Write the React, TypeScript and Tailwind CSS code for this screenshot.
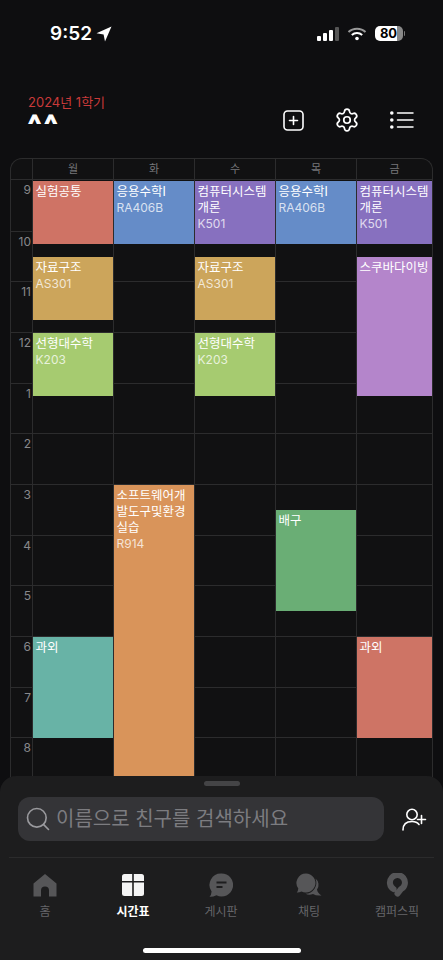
import React from 'react';
import { Search, Settings } from 'lucide-react';

const FONT = "font-['Inter','Noto_Sans_CJK_KR',sans-serif]";
const HOUR = 50.67;
const hours = ['9', '10', '11', '12', '1', '2', '3', '4', '5', '6', '7', '8'];
const days = ['월', '화', '수', '목', '금'];

interface Course {
  day: number;
  top: number;
  height: number;
  title: string;
  room?: string;
  color: string;
}

const courses: Course[] = [
  { day: 0, top: 1, height: 63, title: '실험공통', color: 'bg-[#cf7365]' },
  { day: 1, top: 1, height: 63, title: '응용수학I', room: 'RA406B', color: 'bg-[#658cc8]' },
  { day: 2, top: 1, height: 63, title: '컴퓨터시스템개론', room: 'K501', color: 'bg-[#8770bf]' },
  { day: 3, top: 1, height: 63, title: '응용수학I', room: 'RA406B', color: 'bg-[#658cc8]' },
  { day: 4, top: 1, height: 63, title: '컴퓨터시스템개론', room: 'K501', color: 'bg-[#8770bf]' },
  { day: 0, top: 77, height: 63, title: '자료구조', room: 'AS301', color: 'bg-[#cca55b]' },
  { day: 2, top: 77, height: 63, title: '자료구조', room: 'AS301', color: 'bg-[#cca55b]' },
  { day: 0, top: 153, height: 63, title: '선형대수학', room: 'K203', color: 'bg-[#a6cb70]' },
  { day: 2, top: 153, height: 63, title: '선형대수학', room: 'K203', color: 'bg-[#a6cb70]' },
  { day: 4, top: 77, height: 139, title: '스쿠바다이빙', color: 'bg-[#b485cb]' },
  { day: 1, top: 305, height: 300, title: '소프트웨어개발도구및환경실습', room: 'R914', color: 'bg-[#d9945a]' },
  { day: 3, top: 330, height: 101, title: '배구', color: 'bg-[#6aae75]' },
  { day: 0, top: 457, height: 101, title: '과외', color: 'bg-[#68b3a6]' },
  { day: 4, top: 457, height: 101, title: '과외', color: 'bg-[#ce7465]' },
];

const StatusBar = () => (
  <div className="flex h-[66px] items-center justify-between pl-[50px] pr-[38px] pt-[1px]">
    <div className="flex items-center gap-[4px] text-white">
      <span className="text-[19px] font-semibold leading-none">9:52</span>
      <svg width="16" height="16" viewBox="0 0 16 16" fill="white">
        <path d="M15.5 0.5 L0.5 7.2 L7.6 8.4 L9 15.5 Z" />
      </svg>
    </div>
    <div className="flex items-center gap-[8px]">
      <svg width="22" height="14" viewBox="0 0 22 14" fill="white">
        <rect x="0" y="9" width="4" height="5" rx="1" />
        <rect x="6" y="6" width="4" height="8" rx="1" />
        <rect x="12" y="3" width="4" height="11" rx="1" />
        <rect x="18" y="0" width="4" height="14" rx="1" fill="#555" />
      </svg>
      <svg width="20" height="14" viewBox="0 0 20 14" fill="none" stroke="white" strokeWidth="2">
        <path d="M1.5 5 C6 0.6 14 0.6 18.5 5" stroke="#999" />
        <path d="M4.8 8 C7.8 5.3 12.2 5.3 15.2 8" />
        <circle cx="10" cy="11.5" r="1.8" fill="white" stroke="none" />
      </svg>
      <div className="flex items-center gap-[1px]">
        <div className="flex h-[15px] w-[28px] items-center justify-center rounded-[5px] bg-[linear-gradient(90deg,#fff_78%,#888_78%)] text-[13px] font-bold leading-none text-black">
          80
        </div>
        <div className="h-[5px] w-[1.5px] rounded-r bg-[#777]" />
      </div>
    </div>
  </div>
);

const Header = () => (
  <div className="flex h-[92px] items-start justify-between pl-[28px] pr-[29px] pt-[27px]">
    <div>
      <p className="text-[13px] leading-[18px] text-[#c93a3a]">2024년 1학기</p>
      <p className="mt-[1px] text-[27px] font-bold leading-[26px] tracking-[3px] text-white [-webkit-text-stroke:1px_white]">^^</p>
    </div>
    <div className="mt-[14px] flex items-center gap-[30px]">
      <svg width="21" height="21" viewBox="0 0 21 21" fill="none" stroke="white" strokeWidth="1.6" strokeLinecap="round">
        <rect x="1" y="1" width="19" height="19" rx="3.5" />
        <path d="M10.5 6.5v8M6.5 10.5h8" />
      </svg>
      <Settings size={26} color="white" strokeWidth={1.6} />
      <svg width="24" height="18" viewBox="0 0 24 18" fill="white" stroke="white" strokeLinecap="round">
        <circle cx="1.8" cy="2" r="1.8" stroke="none" />
        <circle cx="1.8" cy="9" r="1.8" stroke="none" />
        <circle cx="1.8" cy="16" r="1.8" stroke="none" />
        <path d="M7.5 2H23M7.5 9H23M7.5 16H23" strokeWidth="1.5" />
      </svg>
    </div>
  </div>
);

const CourseBlock = ({ course }: { course: Course }) => (
  <div
    className={`absolute inset-x-0 overflow-hidden pl-[2.5px] pt-[3px] ${course.color}`}
    style={{ top: course.top, height: course.height }}
  >
    <p className="break-all text-[12.5px] font-normal leading-[16px] text-white">{course.title}</p>
    {course.room && <p className="text-[12px] leading-[15px] text-white/75">{course.room}</p>}
  </div>
);

const Timetable = () => (
  <div className="mx-[10px] h-[640px] overflow-hidden rounded-t-[12px] border-x border-t border-[#2c2c2d] bg-[#111112]">
    <div className="flex">
      <div className="h-[21px] w-[21px] shrink-0 border-b border-[#2c2c2d]" />
      {days.map((d, i) => (
        <div
          key={d}
          className={`flex h-[21px] items-center justify-center border-b border-l border-[#2c2c2d] text-[11px] text-[#77777a] ${i === 4 ? 'flex-1' : 'w-[81px]'}`}
        >
          {d}
        </div>
      ))}
    </div>
    <div className="flex">
      <div className="w-[21px] shrink-0">
        {hours.map((h, i) => (
          <div
            key={h}
            className={`pr-[1px] text-right text-[12px] leading-[15px] text-[#88888b] ${i > 0 ? 'border-t border-[#2c2c2d]' : ''}`}
            style={{ height: HOUR, paddingTop: 2 }}
          >
            {h}
          </div>
        ))}
      </div>
      {days.map((d, day) => (
        <div key={d} className={`relative border-l border-[#2c2c2d] ${day === 4 ? 'flex-1' : 'w-[81px]'}`}>
          {hours.map((h, i) => (
            <div key={h} className={i > 0 ? 'border-t border-[#2c2c2d]' : ''} style={{ height: HOUR }} />
          ))}
          {courses
            .filter(c => c.day === day)
            .map(c => (
              <CourseBlock key={c.title + c.top} course={c} />
            ))}
        </div>
      ))}
    </div>
  </div>
);

const HomeIcon = () => (
  <svg width="24" height="24" viewBox="0 0 24 24" fill="#565658">
    <path d="M12 1 L23.5 10.5 V23.5 H16 V17.5 a4 4 0 0 0 -8 0 V23.5 H0.5 V10.5 Z" />
  </svg>
);

const TableIcon = () => (
  <svg width="22" height="22" viewBox="0 0 22 22" fill="#f4f4f4">
    <path d="M2.5 0 H10.2 V7 H0 V2.5 A2.5 2.5 0 0 1 2.5 0Z" />
    <path d="M11.8 0 H19.5 A2.5 2.5 0 0 1 22 2.5 V7 H11.8Z" />
    <path d="M0 8.6 H10.2 V22 H2.5 A2.5 2.5 0 0 1 0 19.5Z" />
    <path d="M11.8 8.6 H22 V19.5 A2.5 2.5 0 0 1 19.5 22 H11.8Z" />
  </svg>
);

const BoardIcon = () => (
  <svg width="24" height="24" viewBox="0 0 24 24">
    <path d="M12.5 0.5 A11.5 11.5 0 1 1 7.5 22.3 Q4 24 0.5 23.8 Q2.4 22 2.6 18.6 A11.5 11.5 0 0 1 12.5 0.5Z" fill="#565658" />
    <path d="M7.5 9.5 H17.5 M7.5 14 H13.5" stroke="#1d1d1e" strokeWidth="2" />
  </svg>
);

const ChatIcon = () => (
  <svg width="26" height="24" viewBox="0 0 26 24" fill="#565658">
    <path d="M10 0.5 A9.5 9.5 0 1 1 5.5 18.4 Q3 19.6 0.8 19.4 Q2.2 17.8 2.3 15.6 A9.5 9.5 0 0 1 10 0.5Z" />
    <path d="M19.5 5.5 A8 8 0 0 1 21 16.5 Q21.5 20 25.5 22.5 Q20 23 17 21 Q13 22.5 9.5 20.8 A11 11 0 0 0 19.5 5.5Z" />
  </svg>
);

const PickIcon = () => (
  <svg width="22" height="24" viewBox="0 0 22 24" fill="none">
    <path d="M7.5 16 A7.5 7.5 0 1 1 15 16.2 L11.5 20.5" stroke="#565658" strokeWidth="6" strokeLinecap="round" />
  </svg>
);

const tabs = [
  { label: '홈', icon: <HomeIcon />, active: false },
  { label: '시간표', icon: <TableIcon />, active: true },
  { label: '게시판', icon: <BoardIcon />, active: false },
  { label: '채팅', icon: <ChatIcon />, active: false },
  { label: '캠퍼스픽', icon: <PickIcon />, active: false },
];

const BottomSheet = () => (
  <div className="absolute inset-x-0 bottom-0 h-[184px] rounded-t-[16px] bg-[#1d1d1e]">
    <div className="mx-auto mt-[5px] h-[5px] w-[36px] rounded-full bg-[#444446]" />
    <div className="mt-[11px] flex items-center pl-[18px]">
      <div className="flex h-[44px] w-[366px] items-center gap-[4px] rounded-[12px] bg-[#343437] pl-[6px]">
        <Search size={28} color="#9a9a9e" strokeWidth={1.4} />
        <span className="text-[20px] leading-none text-[#7c7c80]">이름으로 친구를 검색하세요</span>
      </div>
      <svg width="25" height="23" viewBox="0 0 25 23" fill="none" stroke="white" strokeWidth="1.6" strokeLinecap="round" className="ml-[18px]">
        <circle cx="10" cy="6.5" r="5.2" />
        <path d="M1 22 C1 16 5 13.5 10 13.5 C13 13.5 15.5 14.5 17 16.5" />
        <path d="M19.5 7.5v8M15.5 11.5h8" />
      </svg>
    </div>
    <div className="mx-[9px] mt-[16px] border-t border-[#2b2b2c]" />
    <div className="mt-[14px] flex px-[1px]">
      {tabs.map(t => (
        <div key={t.label} className="flex h-[60px] w-[88px] flex-col items-center">
          <div className="flex h-[26px] items-center">{t.icon}</div>
          <span
            className={`mt-[6px] text-[12px] leading-[16px] ${t.active ? 'font-bold text-white' : 'text-[#66666a]'}`}
          >
            {t.label}
          </span>
        </div>
      ))}
    </div>
    <div className="absolute bottom-[7px] left-[143px] h-[5px] w-[158px] rounded-full bg-white" />
  </div>
);

export default function App() {
  return (
    <div className={`relative h-[960px] w-[443px] overflow-hidden bg-[#0e0e10] ${FONT}`}>
      <StatusBar />
      <Header />
      <Timetable />
      <BottomSheet />
    </div>
  );
}
